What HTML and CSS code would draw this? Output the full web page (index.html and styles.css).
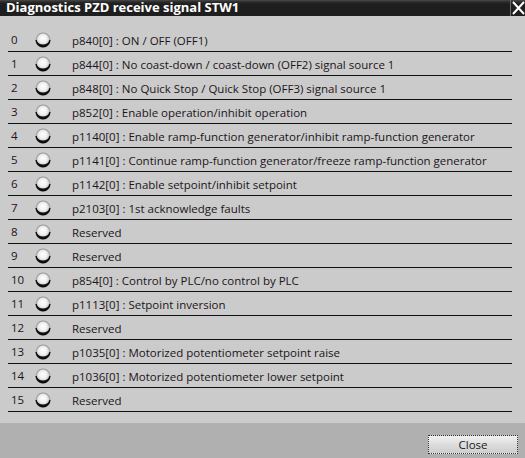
FILE: index.html
```html
<!DOCTYPE html>
<html>
<head>
<meta charset="utf-8">
<link rel="stylesheet" href="styles.css">
</head>
<body>
<div class="window">
  <div class="titlebar">
    <span class="title">Diagnostics PZD receive signal STW1</span>
    <span class="close-x">
      <svg width="13" height="16" viewBox="0 0 13 16"><path d="M1 2 L12 14 M12 2 L1 14" stroke="#fff" stroke-width="2"/></svg>
    </span>
  </div>
  <div class="content">
    <div class="list" id="list"></div>
  </div>
  <div class="footer">
    <button class="btn">Close</button>
  </div>
</div>
<svg width="0" height="0" class="defs">
  <defs>
    <radialGradient id="ledg" cx="0.5" cy="0.4" r="0.55">
      <stop offset="0" stop-color="#ffffff"/>
      <stop offset="0.55" stop-color="#f0f0f0"/>
      <stop offset="1" stop-color="#b8b8b8"/>
    </radialGradient>
  </defs>
</svg>
<script>
var items = [
 "p840[0] : ON / OFF (OFF1)",
 "p844[0] : No coast-down / coast-down (OFF2) signal source 1",
 "p848[0] : No Quick Stop / Quick Stop (OFF3) signal source 1",
 "p852[0] : Enable operation/inhibit operation",
 "p1140[0] : Enable ramp-function generator/inhibit ramp-function generator",
 "p1141[0] : Continue ramp-function generator/freeze ramp-function generator",
 "p1142[0] : Enable setpoint/inhibit setpoint",
 "p2103[0] : 1st acknowledge faults",
 "Reserved",
 "Reserved",
 "p854[0] : Control by PLC/no control by PLC",
 "p1113[0] : Setpoint inversion",
 "Reserved",
 "p1035[0] : Motorized potentiometer setpoint raise",
 "p1036[0] : Motorized potentiometer lower setpoint",
 "Reserved"
];
var led = '<svg width="16" height="16" viewBox="0 0 16 16">' +
  '<circle cx="8" cy="8" r="7.5" fill="#9c9c9c"/>' +
  '<circle cx="8" cy="8" r="6.5" fill="url(#ledg)"/>' +
  '<path d="M0.5 8 A7.5 7.5 0 0 0 15.5 8 L14.2 8 A6.2 4.6 0 0 1 1.8 8 Z" fill="#0c0c0c"/>' +
  '</svg>';
var html = "";
for (var i = 0; i < items.length; i++) {
  html += '<div class="row"><span class="num">' + i + '</span><span class="led">' + led + '</span><span class="txt">' + items[i] + '</span></div>';
}
document.getElementById("list").innerHTML = html;
</script>
</body>
</html>
```
FILE: styles.css
```css
html, body {
  margin: 0;
  padding: 0;
  width: 525px;
  height: 458px;
  overflow: hidden;
  background: #cbcbcb;
}
.defs {
  position: absolute;
}
.window {
  display: flex;
  flex-direction: column;
  width: 525px;
  height: 458px;
}
.titlebar {
  height: 16px;
  background: linear-gradient(#4a4a4a 0px, #2a2a2a 2px, #1e1e1e 4px);
  display: flex;
  align-items: center;
  justify-content: space-between;
  overflow: hidden;
}
.title {
  color: #fff;
  font-family: "Open Sans", "DejaVu Sans", sans-serif;
  font-weight: bold;
  font-size: 13px;
  padding-left: 6px;
  line-height: 16px;
  margin-top: -2px;
}
.close-x {
  display: flex;
  height: 16px;
  border-left: 1px solid #6a6a6a;
  padding-left: 1px;
}
.content {
  flex: 1;
  background: #cbcbcb;
  padding: 12px 13px 0 8px;
}
.list {
  display: flex;
  flex-direction: column;
}
.row {
  height: 23px;
  border-bottom: 1px solid #111;
  display: flex;
  align-items: center;
  font-family: "Open Sans", "Noto Sans", sans-serif;
  font-size: 11.5px;
  color: #1c1420;
}
.num {
  width: 27px;
  padding-left: 3px;
  box-sizing: border-box;
}
.led {
  width: 37px;
  display: flex;
  align-items: center;
  margin-top: 1px;
}
.txt {
  white-space: nowrap;
  margin-top: 1px;
}
.footer {
  height: 35px;
  background: #b0b0b0;
  display: flex;
  justify-content: flex-end;
  align-items: flex-start;
  padding: 12px 7px 0 0;
  box-sizing: border-box;
}
.btn {
  width: 90px;
  height: 19px;
  border: 1px dotted #333;
  background: linear-gradient(#f2f2f2, #dcdcdc 50%, #cfcfcf);
  font-family: "Open Sans", "Noto Sans", sans-serif;
  font-size: 11.5px;
  color: #1a1a1a;
  padding: 0;
  line-height: 16px;
}
```
